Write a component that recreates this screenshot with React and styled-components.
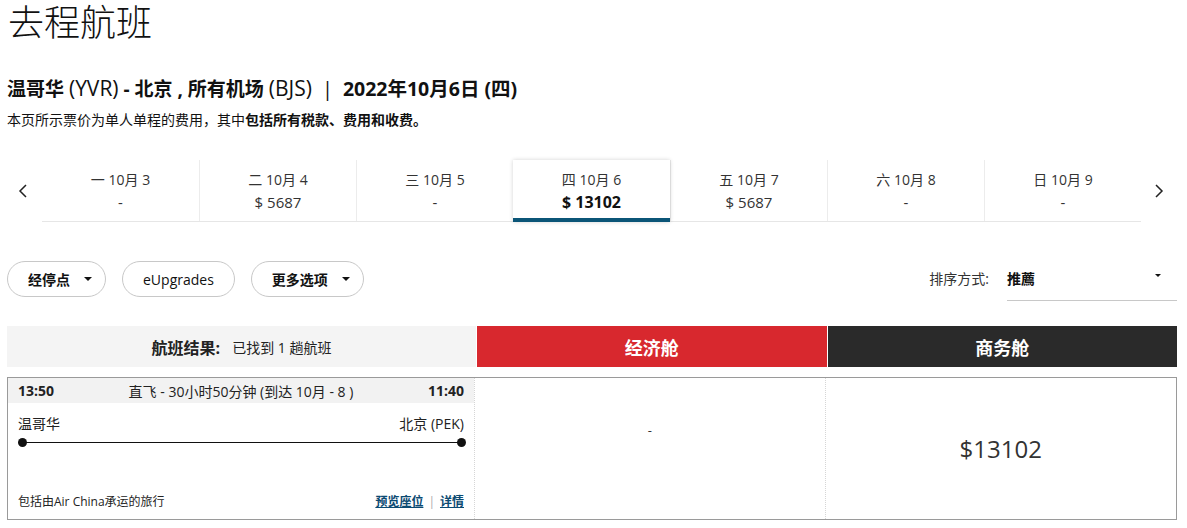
import React from 'react';
import styled, { createGlobalStyle } from 'styled-components';

const GlobalStyle = createGlobalStyle`
  html, body {
    margin: 0;
    padding: 0;
    background: #fff;
  }
  body {
    font-family: "Open Sans", "Noto Sans CJK SC", sans-serif;
    color: #333;
  }
`;

const Page = styled.div`
  padding: 0 10px 0 7px;
`;

const Title = styled.h1`
  margin: 0;
  font-size: 36px;
  line-height: 46px;
  font-weight: 300;
  color: #111;
  padding-left: 1px;
`;

const Route = styled.h2`
  margin: 29px 0 0;
  font-size: 19px;
  line-height: 26px;
  font-weight: 700;
  color: #111;
  display: flex;
  align-items: baseline;
  white-space: pre;
`;

const Code = styled.span`
  font-size: 21px;
  font-weight: 400;
`;

const Sep = styled.span`
  font-weight: 400;
  margin: 0 10px;
  font-size: 20px;
`;

const DateText = styled.span`
  font-size: 19.5px;
`;

const Note = styled.p`
  margin: 8px 0 0;
  font-size: 14px;
  line-height: 19px;
  color: #111;
  b {
    font-weight: 700;
  }
`;

const DateStrip = styled.div`
  margin-top: 31px;
  display: flex;
  align-items: stretch;
  height: 62px;
`;

const Arrow = styled.button`
  width: ${p => p.$w}px;
  flex: none;
  border: 0;
  background: none;
  padding: 0 ${p => p.$pr || 0}px 0 0;
  display: flex;
  align-items: center;
  justify-content: center;
  color: #222;
  cursor: pointer;
`;

const Tabs = styled.div`
  flex: 1;
  display: grid;
  grid-template-columns: repeat(7, 1fr);
  border-bottom: 1px solid #e6e6e6;
`;

const Tab = styled.div`
  position: relative;
  display: flex;
  flex-direction: column;
  align-items: center;
  padding-top: 10px;
  background: #fff;
  border-left: ${p => (p.$first ? '0' : '1px solid #ececec')};
  ${p =>
    p.$active &&
    `
    box-shadow: 0 0 4px rgba(0,0,0,0.18);
    border-left: 0;
    border-bottom: 4px solid #0b5577;
    margin-bottom: -1px;
    z-index: 1;
  `}
`;

const TabDay = styled.div`
  font-size: 14px;
  line-height: 20px;
  color: #333;
`;

const TabPrice = styled.div`
  margin-top: 1px;
  font-size: ${p => (p.$active ? '16px' : '15px')};
  font-weight: ${p => (p.$active ? 700 : 400)};
  line-height: 22px;
  color: ${p => (p.$active ? '#111' : '#333')};
`;

const FilterRow = styled.div`
  margin-top: 39px;
  display: flex;
  align-items: flex-start;
`;

const Pills = styled.div`
  display: flex;
`;

const Pill = styled.button`
  height: 36px;
  margin-right: ${p => p.$mr}px;
  padding: 0 ${p => p.$pr}px 0 ${p => p.$pl}px;
  border: 1px solid #c8c8c8;
  border-radius: 18px;
  background: #fff;
  display: flex;
  align-items: center;
  gap: 14px;
  font-family: "Open Sans", "Noto Sans CJK SC", sans-serif;
  font-size: 14px;
  font-weight: ${p => (p.$bold ? 700 : 400)};
  color: #111;
`;

const Caret = styled.span`
  width: 0;
  height: 0;
  border-left: ${p => p.$s}px solid transparent;
  border-right: ${p => p.$s}px solid transparent;
  border-top: ${p => p.$s}px solid #111;
`;

const Sort = styled.div`
  margin-left: auto;
  display: flex;
  align-items: flex-start;
  padding-top: 8px;
`;

const SortLabel = styled.span`
  font-size: 14px;
  line-height: 20px;
  color: #333;
  margin-right: 18px;
`;

const SortSelect = styled.div`
  width: 170px;
  height: 32px;
  border-bottom: 1px solid #c8c8c8;
  display: flex;
  justify-content: space-between;
  padding-right: 16px;
  box-sizing: border-box;
  font-size: 14px;
  font-weight: 700;
  line-height: 20px;
  color: #111;
  span.c {
    margin-top: 8px;
  }
`;

const ResultHead = styled.div`
  margin-top: 25px;
  display: grid;
  grid-template-columns: 469px 1fr 1fr;
  gap: 1px;
  height: 41px;
`;

const HeadCell = styled.div`
  background: ${p => p.$bg};
  color: ${p => p.$fg};
  display: flex;
  align-items: center;
  justify-content: center;
  font-size: ${p => (p.$big ? '18px' : '16px')};
  font-weight: 700;
  small {
    font-size: 14px;
    font-weight: 400;
    margin-left: 12px;
  }
`;

const Card = styled.div`
  margin-top: 10px;
  border: 1px solid #9a9a9a;
  display: grid;
  grid-template-columns: 467px 1fr 1fr;
  height: 141px;
`;

const FlightCol = styled.div`
  display: flex;
  flex-direction: column;
  border-right: 1px dotted #d6d6d6;
`;

const FlightTop = styled.div`
  height: 25px;
  background: #f2f2f2;
  display: flex;
  align-items: center;
  justify-content: space-between;
  padding: 0 10px;
  font-size: 14px;
  color: #222;
  b {
    font-weight: 700;
  }
`;

const Cities = styled.div`
  margin-top: 11px;
  padding: 0 10px;
  display: flex;
  justify-content: space-between;
  font-size: 14px;
  line-height: 19px;
  color: #222;
`;

const Track = styled.div`
  position: relative;
  margin: 9px 12px 0 14px;
  height: 1px;
  background: #111;
  &::before,
  &::after {
    content: '';
    position: absolute;
    top: -4px;
    width: 9px;
    height: 9px;
    border-radius: 50%;
    background: #111;
  }
  &::before {
    left: -4px;
  }
  &::after {
    right: -4px;
  }
`;

const FlightFoot = styled.div`
  margin-top: auto;
  padding: 0 10px 9px;
  display: flex;
  justify-content: space-between;
  align-items: center;
  font-size: 12px;
  line-height: 16px;
  color: #222;
`;

const Links = styled.div`
  display: flex;
  align-items: center;
  a {
    color: #0b4a72;
    font-weight: 700;
    text-decoration: underline;
  }
  i {
    font-style: normal;
    color: #aaa;
    margin: 0 5px;
  }
`;

const FareCol = styled.div`
  display: flex;
  justify-content: center;
  align-items: ${p => (p.$top ? 'flex-start' : 'center')};
  padding-top: ${p => (p.$top ? '43px' : '0')};
  border-right: ${p => (p.$last ? '0' : '1px dotted #d6d6d6')};
  font-size: ${p => (p.$top ? '13px' : '24px')};
  color: #333;
`;

const days = [
  { d: '一 10月 3', p: '-' },
  { d: '二 10月 4', p: '$ 5687' },
  { d: '三 10月 5', p: '-' },
  { d: '四 10月 6', p: '$ 13102', active: true },
  { d: '五 10月 7', p: '$ 5687' },
  { d: '六 10月 8', p: '-' },
  { d: '日 10月 9', p: '-' },
];

const Chevron = ({ dir }) => (
  <svg width="10" height="16" viewBox="0 0 10 16">
    <polyline
      points={dir === 'left' ? '8,2 2,8 8,14' : '2,2 8,8 2,14'}
      fill="none"
      stroke="#222"
      strokeWidth="1.5"
    />
  </svg>
);

export default function App() {
  return (
    <Page>
      <GlobalStyle />
      <Title>去程航班</Title>
      <Route>
        温哥华 <Code>(YVR)</Code> - 北京 , 所有机场 <Code>(BJS)</Code>
        <Sep>|</Sep>
        <DateText>2022年10月6日 (四)</DateText>
      </Route>
      <Note>
        本页所示票价为单人单程的费用，其中<b>包括所有税款、费用和收费。</b>
      </Note>

      <DateStrip>
        <Arrow $w={35} $pr={3}>
          <Chevron dir="left" />
        </Arrow>
        <Tabs>
          {days.map((x, i) => (
            <Tab key={x.d} $first={i === 0} $active={x.active}>
              <TabDay>{x.d}</TabDay>
              <TabPrice $active={x.active}>{x.p}</TabPrice>
            </Tab>
          ))}
        </Tabs>
        <Arrow $w={36}>
          <Chevron dir="right" />
        </Arrow>
      </DateStrip>

      <FilterRow>
        <Pills>
          <Pill $bold $pl={20} $pr={13} $mr={16}>
            经停点 <Caret $s={4} />
          </Pill>
          <Pill $pl={20} $pr={20} $mr={16}>
            eUpgrades
          </Pill>
          <Pill $bold $pl={20} $pr={13} $mr={0}>
            更多选项 <Caret $s={4} />
          </Pill>
        </Pills>
        <Sort>
          <SortLabel>排序方式:</SortLabel>
          <SortSelect>
            <span>推薦</span>
            <span className="c">
              <Caret $s={3} />
            </span>
          </SortSelect>
        </Sort>
      </FilterRow>

      <ResultHead>
        <HeadCell $bg="#f4f4f4" $fg="#222">
          航班结果:<small>已找到 1 趟航班</small>
        </HeadCell>
        <HeadCell $bg="#d8282e" $fg="#fff" $big>
          经济舱
        </HeadCell>
        <HeadCell $bg="#2a2a2a" $fg="#fff" $big>
          商务舱
        </HeadCell>
      </ResultHead>

      <Card>
        <FlightCol>
          <FlightTop>
            <b>13:50</b>
            <span>直飞 - 30小时50分钟 (到达 10月 - 8 )</span>
            <b>11:40</b>
          </FlightTop>
          <Cities>
            <span>温哥华</span>
            <span>北京 (PEK)</span>
          </Cities>
          <Track />
          <FlightFoot>
            <span>包括由Air China承运的旅行</span>
            <Links>
              <a>预览座位</a>
              <i>|</i>
              <a>详情</a>
            </Links>
          </FlightFoot>
        </FlightCol>
        <FareCol $top>-</FareCol>
        <FareCol $last>$13102</FareCol>
      </Card>
    </Page>
  );
}
